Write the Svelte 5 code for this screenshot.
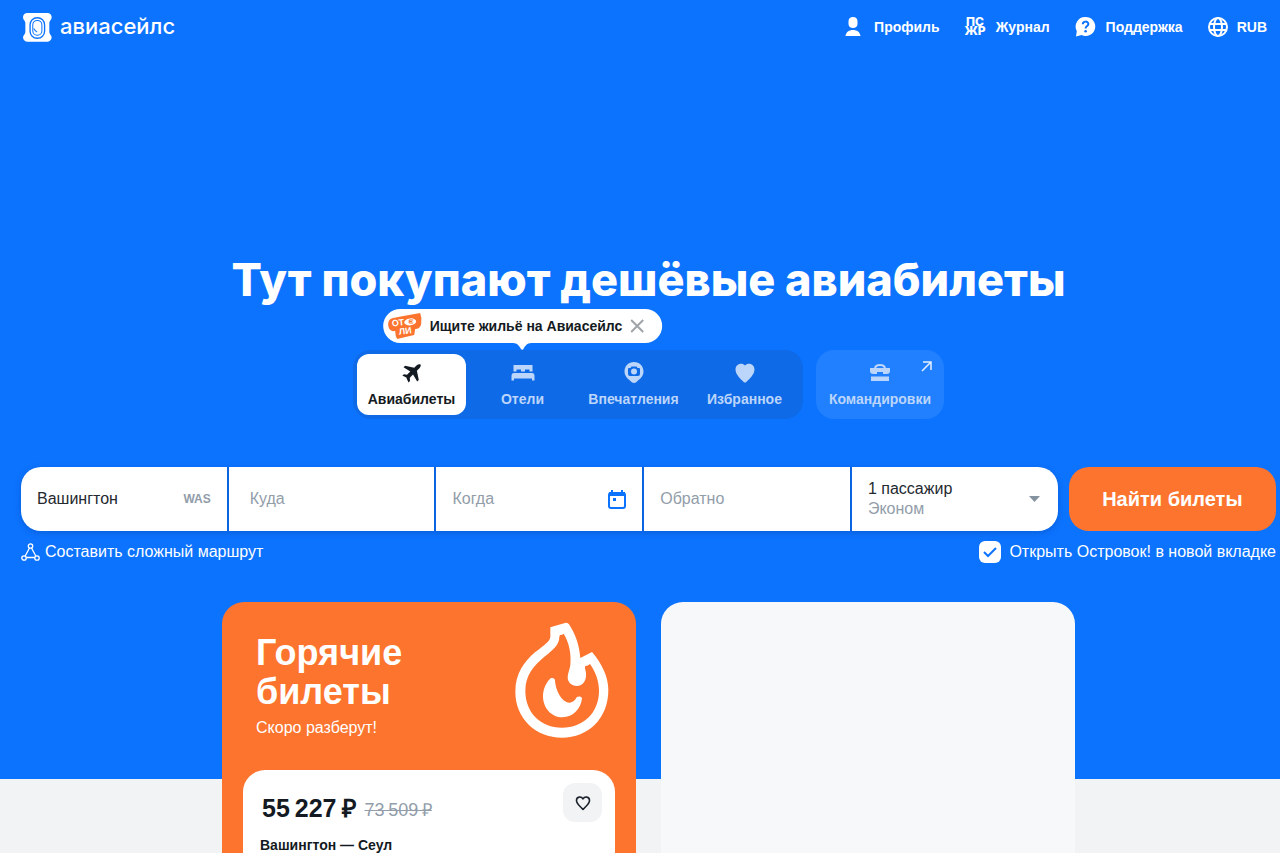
<script lang="ts">
	let origin = $state('Вашингтон');
	let destination = $state('');
	let departDate = $state('');
	let returnDate = $state('');
	let openHotels = $state(true);
	let showHint = $state(true);
	let liked = $state(false);
</script>

<div class="page">
	<div class="hero">
		<header>
			<a class="logo" href="/">
				<svg width="29" height="29" viewBox="69 38 86 86" aria-hidden="true">
					<path
						fill="#fff"
						d="M80 38H143Q154 40 154 51C154 57 147 61 147 67V94C147 101 154 104 154 110Q153 122 142 123H81Q70 122 69 110C69 104 76 101 76 94V67C76 61 69 57 69 51Q69 40 80 38Z"
					/>
					<rect x="90" y="52" width="43" height="61" rx="21" fill="none" stroke="#0c73fe" stroke-width="4" />
					<rect x="98" y="60" width="27" height="44" rx="13" fill="none" stroke="#0c73fe" stroke-width="3" />
					<path d="M101 84Q105 93 111 94" fill="none" stroke="#0c73fe" stroke-width="3" />
				</svg>
				<span>авиасейлс</span>
			</a>
			<nav class="links">
				<a href="/profile">
					<svg width="24" height="24" viewBox="0 0 24 24" fill="currentColor" aria-hidden="true">
						<path d="M12 2C15 2 16.500 3.500 16.500 6.500V9C16.500 11.500 14.500 13 12 13S7.500 11.500 7.500 9V6.500C7.500 3.500 9 2 12 2ZM4.500 21C5 17 8 15 12 15S19 17 19.500 21Z" />
					</svg>
					Профиль
				</a>
				<a href="/journal">
					<svg class="psgr" width="24" height="24" viewBox="0 0 24 24" fill="currentColor" aria-hidden="true">
						<text text-anchor="middle"><tspan x="12" y="11">ПС</tspan><tspan x="12" y="20">ЖР</tspan></text>
					</svg>
					Журнал
				</a>
				<a href="/support">
					<svg width="24" height="24" viewBox="0 0 24 24" aria-hidden="true">
						<path fill="currentColor" d="M12.500 2A9.500 9.500 0 1 1 8.500 20L3 21.500L3.800 16A9.500 9.500 0 0 1 12.500 2Z" />
						<path d="M9.800 9.200C9.800 5.800 15.400 5.800 15.400 9C15.400 11.200 12.600 11 12.600 13.600" fill="none" stroke="#0c73fe" stroke-width="2" />
						<circle cx="12.600" cy="16.300" r="1.300" fill="#0c73fe" />
					</svg>
					Поддержка
				</a>
				<button class="currency" type="button">
					<svg width="24" height="24" viewBox="0 0 24 24" fill="none" stroke="currentColor" stroke-width="2" aria-hidden="true">
						<circle cx="12" cy="12" r="9" />
						<ellipse cx="12" cy="12" rx="4" ry="9" />
						<path d="M3.500 9H20.500M3.500 15H20.500" />
					</svg>
					RUB
				</button>
			</nav>
		</header>

		<h1>Тут покупают дешёвые авиабилеты</h1>

		<nav class="tabs">
			<div class="tab-group">
				<a class="tab active" href="/flights">
					<svg width="24" height="24" viewBox="0 0 24 24" fill="currentColor" aria-hidden="true">
						<path d="M20.500 3.500C19.500 2.800 18 3.200 16.800 4.300L14.200 6.800L5.200 4.700L3.500 6.200L10.300 10.500L7 13.700L4 13.200L2.300 14.600L6.300 16.500L6.700 17.500L8.500 21.500L10 20L9.800 16.800L13 13.600L17.200 20.500L18.800 19L16.900 9.700L19.400 7.200C20.500 6 21.200 4.400 20.500 3.500Z" />
					</svg>
					<span>Авиабилеты</span>
				</a>
				<div class="hotels">
					<a class="tab" href="/hotels">
						<svg width="24" height="24" viewBox="0 0 24 24" fill="currentColor" aria-hidden="true">
							<path d="M2.500 4H21.500V10.500H18.500V8.500H14V10.500H10V8.500H5.500V10.500H2.500ZM3 12H21Q23.500 12 23.500 15V19.500H21V17.500H3V19.500H0.500V15Q0.500 12 3 12Z" />
						</svg>
						<span>Отели</span>
					</a>
					{#if showHint}
						<div class="hint">
							<svg width="36" height="28" viewBox="0 0 36 28" aria-hidden="true">
								<path fill="#fc742d" d="M6 6C14 4 24 3 33 1Q35 6 34 12Q33 17 28 17L27 23Q18 25 10 27Q8 24 8 19C3 20 1 16 1 12Q1 7 6 6Z" />
								<g transform="rotate(-7 18 14)" fill="#fff">
									<text x="5" y="13">ОТ</text>
									<ellipse cx="23.500" cy="10.500" rx="6" ry="3.500" />
									<text x="11" y="22">ЛИ</text>
								</g>
								<path d="M26 8H22V11H26M22 9.500H25" stroke="#fc742d" fill="none" />
							</svg>
							<span>Ищите жильё на Авиасейлс</span>
							<button type="button" aria-label="Закрыть" onclick={() => (showHint = false)}>
								<svg width="14" height="14" viewBox="0 0 14 14" stroke="#a0a4a9" stroke-width="2" aria-hidden="true">
									<path d="M1 1L13 13M13 1L1 13" />
								</svg>
							</button>
							<svg class="arrow" width="18" height="7" viewBox="0 0 18 7" fill="#fff" aria-hidden="true">
								<path d="M0 0H18C14 0 12 3 10.500 5.500Q9 8 7.500 5.500C6 3 4 0 0 0Z" />
							</svg>
						</div>
					{/if}
				</div>
				<a class="tab" href="/guides">
					<svg width="24" height="24" viewBox="0 0 24 24" aria-hidden="true">
						<path fill="currentColor" fill-rule="evenodd" d="M12 1C17.500 1 21.500 5 21.500 10.500C21.500 16 17 18.500 14.500 21Q12 23 9.500 21C7 18.500 2.500 16 2.500 10.500C2.500 5 6.500 1 12 1ZM9.500 5.500L8.500 7H7Q6 7 6 8V13Q6 15 8 15H16Q18 15 18 13V8Q18 7 17 7H15.500L14.500 5.500ZM12 7.500A3 3 0 1 1 12 13.500A3 3 0 1 1 12 7.500Z" />
					</svg>
					<span>Впечатления</span>
				</a>
				<a class="tab" href="/favorites">
					<svg width="24" height="24" viewBox="0 0 24 24" fill="currentColor" aria-hidden="true">
						<path d="M12 4.500C15 1 21.500 3 21.500 8.500C21.500 13.500 16.500 18 13.300 21Q12 22 10.700 21C7.500 18 2.500 13.500 2.500 8.500C2.500 3 9 1 12 4.500Z" />
					</svg>
					<span>Избранное</span>
				</a>
			</div>
			<a class="tab business" href="/business">
				<svg width="24" height="24" viewBox="0 0 24 24" aria-hidden="true">
					<path fill="currentColor" d="M2 7H22V10Q22 13 18.500 13H15V11H9V13H5.500Q2 13 2 10ZM3 15.500H21V20H3Z" />
					<path d="M7 8Q7 4 12 4T17 8" fill="none" stroke="currentColor" stroke-width="2" />
				</svg>
				<span>Командировки</span>
				<svg class="external" width="11" height="11" viewBox="0 0 11 11" fill="none" stroke="currentColor" stroke-width="1.500" aria-hidden="true">
					<path d="M1 10L10 1M2 1H10V9" />
				</svg>
			</a>
		</nav>

		<form onsubmit={(e) => e.preventDefault()}>
			<div class="fields">
				<div class="field">
					<input aria-label="Откуда" bind:value={origin} />
					<span class="code">WAS</span>
				</div>
				<div class="field destination">
					<input aria-label="Куда" placeholder="Куда" bind:value={destination} />
				</div>
				<div class="field">
					<input aria-label="Когда" placeholder="Когда" bind:value={departDate} />
					<svg width="18" height="19" viewBox="0 0 18 19" aria-hidden="true">
						<rect x="1" y="3" width="16" height="15" rx="2" fill="none" stroke="#0c73fe" stroke-width="2" />
						<path fill="#0c73fe" d="M1 2H17V6H1ZM3 0H5V3H3ZM13 0H15V3H13ZM5 8H8V11H5Z" />
					</svg>
				</div>
				<div class="field">
					<input aria-label="Обратно" placeholder="Обратно" bind:value={returnDate} />
				</div>
				<button class="field passengers" type="button">
					<span>1 пассажир<small>Эконом</small></span>
					<svg width="11" height="6" viewBox="0 0 11 6" fill="#8592a0" aria-hidden="true">
						<path d="M0 0H11L5.500 6Z" />
					</svg>
				</button>
			</div>
			<button class="submit" type="submit">Найти билеты</button>
		</form>

		<div class="under-form">
			<a href="/multi">
				<svg width="19" height="18" viewBox="0 0 19 18" fill="none" stroke="currentColor" stroke-width="1.300" aria-hidden="true">
					<circle cx="9.500" cy="3" r="2.200" />
					<circle cx="3" cy="15" r="2.200" />
					<circle cx="16" cy="15" r="2.200" />
					<path d="M8.500 5L4.200 13M10.500 5L14.800 13M5.200 14.500H13.800" />
				</svg>
				Составить сложный маршрут
			</a>
			<label>
				<span class="box">
					<input type="checkbox" bind:checked={openHotels} />
					{#if openHotels}
						<svg width="14" height="12" viewBox="0 0 14 12" fill="none" stroke="#0c73fe" stroke-width="2" aria-hidden="true">
							<path d="M1 6L5 10L13 2" />
						</svg>
					{/if}
				</span>
				Открыть Островок! в новой вкладке
			</label>
		</div>
	</div>

	<main>
		<section class="card hot">
			<div class="card-head">
				<div>
					<h2>Горячие билеты</h2>
					<p>Скоро разберут!</p>
				</div>
				<svg width="94" height="117" viewBox="255 96 282 351" aria-hidden="true">
					<path fill="#fff" d="M361 112L405 99Q413 97 417 103C436 132 448 165 451 204L486 186C515 220 535 260 535 300C535 385 475 443 396 443S256 385 256 305C256 250 283 215 315 187C345 163 360 154 361 140Z" />
					<path fill="#fc742d" d="M390 135Q396 136 401 131C418 158 424 192 421 225C419 240 413 250 413 262C413 278 425 288 440 288C460 288 470 270 468 250C467 240 464 235 465 229Q474 228 480 222C497 245 507 275 507 302C507 368 460 413 396 413S286 368 286 302C286 255 312 227 345 199C370 178 388 165 388 140Z" />
					<path fill="#fff" d="M359 268C363 262 373 263 375 270C376 300 395 337 418 338C430 338 435 330 440 322C445 318 454 318 456 325C453 355 430 382 397 382C365 382 339 355 339 318C339 300 347 280 359 268Z" />
				</svg>
			</div>
			<article class="ticket">
				<div class="price-row">
					<strong>55&#8239;227&#8239;₽</strong>
					<s>73&#8239;509&#8239;₽</s>
					<button class="like" type="button" aria-label="В избранное" aria-pressed={liked} onclick={() => (liked = !liked)}>
						<svg width="16" height="16" viewBox="0 0 16 16" fill="none" stroke="#1c222b" stroke-width="1.600" stroke-linejoin="round" aria-hidden="true">
							<path d="M8 4C6.500 1 1.500 1.500 1.500 5.500C1.500 9 5.500 11.500 8 14.500C10.500 11.500 14.500 9 14.500 5.500C14.500 1.500 9.500 1 8 4Z" />
						</svg>
					</button>
				</div>
				<h3>Вашингтон — Сеул</h3>
			</article>
		</section>
		<section class="card"></section>
	</main>
</div>

<style>
	:global(body) {
		background: #f2f3f5;
		color: #141a22;
		font-family: 'Liberation Sans', Arial, sans-serif;
		font-size: 16px;
	}
	a {
		color: inherit;
		text-decoration: none;
	}
	button,
	input {
		font: inherit;
		color: inherit;
		border: 0;
		padding: 0;
		background: none;
	}
	button {
		cursor: pointer;
	}
	svg {
		flex: none;
		display: block;
	}
	h1,
	h2,
	h3,
	p {
		margin: 0;
	}

	.page {
		display: flex;
		flex-direction: column;
		min-height: 100vh;
	}
	.hero {
		background: #0c73fe;
		color: #fff;
		padding-bottom: 216px;
	}
	header {
		display: flex;
		align-items: center;
		justify-content: space-between;
		height: 54px;
		padding: 0 13px 0 23px;
	}
	.logo {
		display: flex;
		align-items: center;
		gap: 8px;
		font: 500 22px/28px Inter, sans-serif;
	}
	.logo span {
		padding-bottom: 2px;
	}
	.links {
		display: flex;
		gap: 23px;
		font-size: 14px;
		font-weight: bold;
	}
	.links a,
	.currency {
		display: flex;
		align-items: center;
		gap: 9px;
	}
	.links .currency {
		gap: 7px;
	}
	.psgr {
		font: 800 12px Inter, sans-serif;
	}

	h1 {
		padding-left: 17px;
		margin-top: 198px;
		font: 800 45px/56px Inter, sans-serif;
		text-align: center;
	}

	.tabs {
		display: flex;
		justify-content: center;
		gap: 13px;
		padding-left: 17px;
		margin-top: 42px;
		font-size: 14px;
		line-height: 16px;
		font-weight: bold;
	}
	.tab-group {
		display: grid;
		grid-template-columns: repeat(4, 109px);
		gap: 2px;
		padding: 4px;
		border-radius: 18px;
		background: #0e6ae6;
	}
	.tab {
		position: relative;
		display: flex;
		flex-direction: column;
		align-items: center;
		gap: 6px;
		height: 54px;
		padding-top: 7px;
		border-radius: 12px;
		color: #bcd5fb;
	}
	.tab.active {
		background: #fff;
		color: #141a22;
	}
	.business {
		width: 128px;
		height: 58px;
		padding-top: 11px;
		border-radius: 18px;
		background: #2080ff;
	}
	.external {
		position: absolute;
		top: 11px;
		right: 12px;
		color: #e4efff;
	}

	.hotels {
		position: relative;
	}
	.hint {
		position: absolute;
		bottom: calc(100% + 11px);
		left: 50%;
		transform: translateX(-50%);
		display: flex;
		align-items: center;
		box-sizing: border-box;
		height: 34px;
		padding: 0 18px 0 4px;
		border-radius: 17px;
		background: #fff;
		color: #141a22;
		white-space: nowrap;
	}
	.hint span {
		margin: 0 8px 0 7px;
	}
	.hint text {
		font: bold 9px 'Liberation Sans', sans-serif;
	}
	.arrow {
		position: absolute;
		top: 100%;
		left: 50%;
		transform: translateX(-50%);
	}

	form {
		display: flex;
		gap: 11px;
		padding: 0 4px 0 21px;
		margin-top: 48px;
	}
	.fields {
		flex: 5;
		display: grid;
		grid-template-columns: repeat(5, 1fr);
		gap: 2px;
		overflow: hidden;
		border-radius: 20px;
		background: #0b64df;
		box-shadow: 0 2px 6px rgba(0, 40, 120, 0.25);
	}
	.field {
		display: flex;
		align-items: center;
		min-width: 0;
		height: 64px;
		box-sizing: border-box;
		padding: 0 16px;
		background: #fff;
		color: #24292f;
		text-align: left;
	}
	.field input {
		flex: 1;
		min-width: 0;
		outline: 0;
	}
	.field input::placeholder {
		color: #929daa;
		opacity: 1;
	}
	.destination {
		padding-left: 21px;
	}
	.code {
		color: #929daa;
		font-size: 12px;
		font-weight: bold;
	}
	.passengers {
		justify-content: space-between;
		padding-right: 18px;
		line-height: 20px;
	}
	.passengers small {
		display: block;
		color: #929daa;
		font-size: 16px;
	}
	.submit {
		flex: 1;
		border-radius: 20px;
		background: #fc742d;
		font-size: 20px;
		font-weight: bold;
		white-space: nowrap;
	}

	.under-form {
		display: flex;
		justify-content: space-between;
		padding: 0 4px 0 21px;
		margin-top: 10px;
		height: 22px;
		line-height: 22px;
	}
	.under-form a,
	.under-form label {
		display: flex;
		align-items: center;
		gap: 5px;
	}
	.under-form label {
		gap: 8px;
	}
	.box {
		position: relative;
		display: grid;
		place-items: center;
	}
	.box input {
		appearance: none;
		width: 22px;
		height: 22px;
		margin: 0;
		border-radius: 6px;
		background: #fff;
	}
	.box svg {
		position: absolute;
		pointer-events: none;
	}

	main {
		flex: 1;
		display: grid;
		grid-template-columns: repeat(2, 414px);
		justify-content: center;
		gap: 25px;
		padding-left: 17px;
		margin-top: -177px;
	}
	.card {
		border-radius: 22px 22px 0 0;
		background: #f7f8fa;
	}
	.hot {
		display: flex;
		flex-direction: column;
		padding: 0 21px;
		background: #fc742d;
		color: #fff;
	}
	.card-head {
		display: flex;
		justify-content: space-between;
		height: 148px;
		padding: 20px 6px 0 13px;
	}
	h2 {
		width: 200px;
		padding-top: 11px;
		font-size: 36px;
		line-height: 39px;
	}
	.card-head p {
		margin-top: 8px;
		line-height: 18px;
	}
	.ticket {
		flex: 1;
		padding: 13px 13px 0 17px;
		border-radius: 22px 22px 0 0;
		background: #fff;
		color: #141a22;
	}
	.price-row {
		display: flex;
		align-items: center;
		gap: 8px;
		height: 48px;
		padding-left: 2px;
	}
	.price-row strong {
		font-size: 25px;
	}
	.price-row s {
		padding-top: 4px;
		color: #929daa;
		font-size: 18px;
	}
	.like {
		display: grid;
		place-items: center;
		align-self: flex-start;
		width: 39px;
		height: 39px;
		margin-left: auto;
		border-radius: 12px;
		background: #f2f3f5;
	}
	h3 {
		margin-top: 6px;
		font-size: 14px;
		line-height: 16px;
	}
</style>
